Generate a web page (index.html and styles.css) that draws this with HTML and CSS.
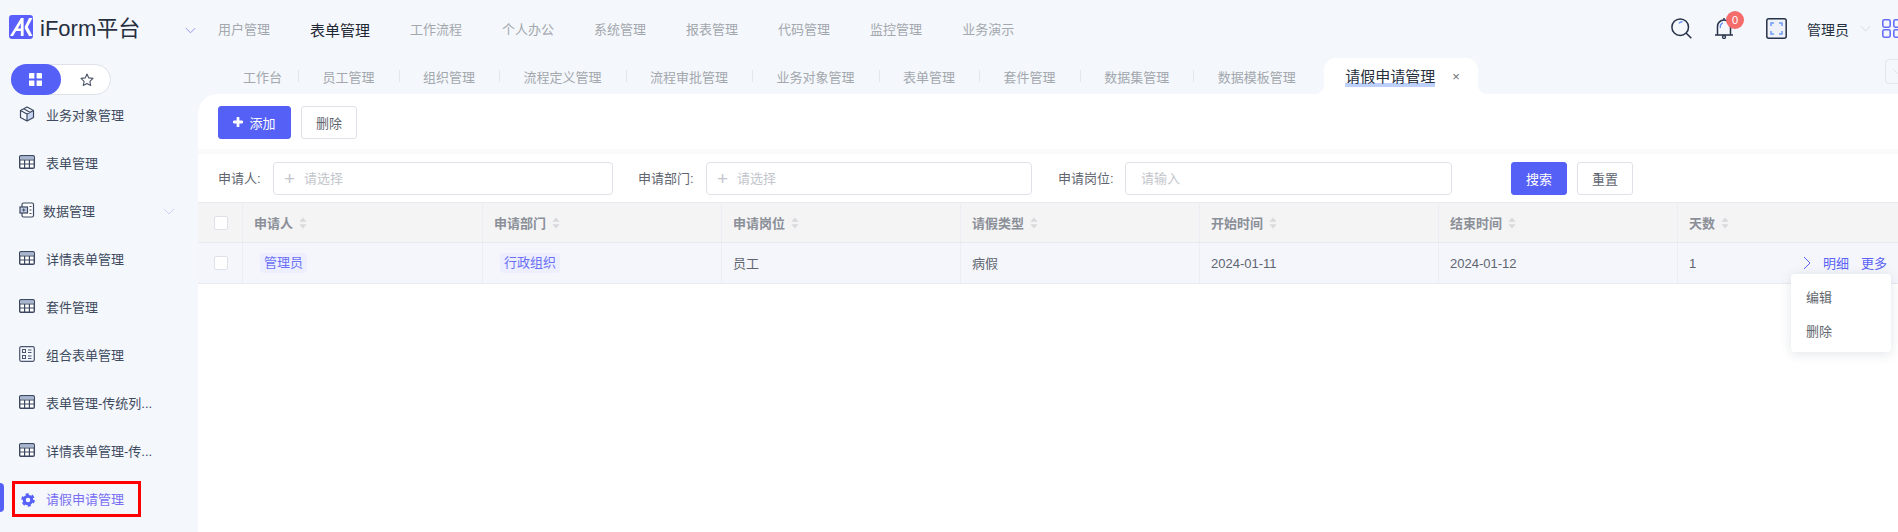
FILE: index.html
```html
<!DOCTYPE html>
<html lang="zh-CN">
<head>
<meta charset="utf-8">
<title>iForm平台</title>
<link rel="stylesheet" href="styles.css">
</head>
<body>
<svg class="defs" width="0" height="0" aria-hidden="true">
  <symbol id="i-table" viewBox="0 0 16 14">
    <rect x=".7" y=".7" width="14.6" height="12.6" rx="1.2" fill="#fff" stroke="#3c4860" stroke-width="1.4"/>
    <rect x="1.4" y="1.4" width="13.2" height="3" fill="#a9b6d0"/>
    <path d="M1 5h14M1 9h14M5.6 5v8M10.4 5v8" stroke="#3c4860" stroke-width="1.2" fill="none"/>
  </symbol>
  <symbol id="i-sort" viewBox="0 0 8 12">
    <path d="M4 0.5 7.6 4.8H.4zM4 11.5.4 7.2h7.2z" fill="#d8d9dc"/>
  </symbol>
  <symbol id="i-chev" viewBox="0 0 12 7">
    <path d="M.8.8 6 6 11.2.8" fill="none" stroke="currentColor" stroke-width="1"/>
  </symbol>
</svg>

<header class="topbar">
  <svg class="logo" viewBox="0 0 24 24" aria-hidden="true">
    <rect width="24" height="24" rx="3" fill="#5a5ffb"/>
    <path d="M1 21 12 3h2.600v18h-2.800v-5H7l-3 5zM8.800 13.500h3V8.600z" fill="#fff"/>
    <path d="M15.800 11.500 20 3h3.500l-4.700 9 4.700 9H20l-4.200-7.500z" fill="#fff"/>
  </svg>
  <span class="brand">iForm平台</span>
  <svg class="chev chev-brand"><use href="#i-chev"/></svg>
  <nav class="mainnav">
    <a>用户管理</a><a class="on">表单管理</a><a>工作流程</a><a>个人办公</a><a>系统管理</a><a>报表管理</a><a>代码管理</a><a>监控管理</a><a>业务演示</a>
  </nav>
  <div class="tools">
    <svg class="t-search" viewBox="0 0 21 21" aria-hidden="true">
      <circle cx="9.2" cy="9.2" r="8.3" fill="none" stroke="#27324a" stroke-width="1.5"/>
      <path d="M15.3 15.3 20.3 20.3" stroke="#27324a" stroke-width="1.6"/>
      <path d="M8 5.2A4.5 4.5 0 0 1 11.5 3.8" stroke="#5f8ffb" stroke-width="1.5" fill="none"/>
    </svg>
    <div class="t-bell">
      <svg viewBox="0 0 20 21" aria-hidden="true">
        <path d="M0 17h18M2.500 17V8.500a6.500 6.500 0 0 1 13 0V17M9 2V0" fill="none" stroke="#27324a" stroke-width="1.500"/>
        <path d="M5.500 10A4 4 0 0 1 8 4.800" fill="none" stroke="#5f8ffb" stroke-width="1.300"/>
        <circle cx="9" cy="19" r="1.500" fill="none" stroke="#27324a" stroke-width="1.300"/>
      </svg>
      <span class="badge">0</span>
    </div>
    <svg class="t-full" viewBox="0 0 21 21" aria-hidden="true">
      <rect x=".8" y=".8" width="19.4" height="19.4" rx="2" fill="#eef1f7" stroke="#27324a" stroke-width="1.5"/>
      <path d="M5 8V5h3M13 5h3v3M16 13v3h-3M8 16H5v-3" fill="none" stroke="#6f9bfb" stroke-width="1.5"/>
    </svg>
    <span class="uname">管理员</span>
    <svg class="chev chev-user"><use href="#i-chev"/></svg>
    <svg class="t-apps" viewBox="0 0 20 19" aria-hidden="true">
      <rect x=".8" y=".8" width="7.4" height="7.4" rx="1.6"/><rect x="11.8" y=".8" width="7.4" height="7.4" rx="1.6"/>
      <rect x=".8" y="10.8" width="7.4" height="7.4" rx="1.6"/><rect x="11.8" y="10.8" width="7.4" height="7.4" rx="1.6"/>
    </svg>
  </div>
</header>

<div class="body">
  <aside class="side">
    <div class="toggle">
      <span class="tg tg-on">
        <svg class="tg-grid" viewBox="0 0 12 12" aria-hidden="true"><path d="M0 1a1 1 0 0 1 1-1h4v5H0zM7 0h4a1 1 0 0 1 1 1v4H7zM0 7h5v5H1a1 1 0 0 1-1-1zM7 7h5v4a1 1 0 0 1-1 1H7z" fill="#fff"/></svg>
      </span>
      <span class="tg">
        <svg class="tg-star" viewBox="0 0 14 14" aria-hidden="true"><path d="M7 1l1.8 3.9 4.2.5-3.1 2.9.8 4.2L7 10.4l-3.7 2.1.8-4.2L1 5.4l4.2-.5z" fill="none" stroke="#4b5568" stroke-width="1.1" stroke-linejoin="round"/></svg>
      </span>
    </div>
    <ul class="menu">
      <li><svg class="mi" viewBox="0 0 16 16" aria-hidden="true"><path d="M8 8l6.5-3.5V11.500L8 15z" fill="#c9d6f2"/><path d="M8 1l6.500 3.500V11.500L8 15 1.500 11.500V4.500zM1.500 4.500 8 8l6.500-3.500M8 8v7M4.800 2.800l6.400 3.600" fill="none" stroke="#3c4860" stroke-width="1.200" stroke-linejoin="round"/></svg>业务对象管理</li>
      <li><svg class="mi"><use href="#i-table"/></svg>表单管理</li>
      <li class="group"><svg class="mi mi-data" viewBox="0 0 16 16" aria-hidden="true"><rect x="3" y="1" width="11.500" height="14" rx="1.500" fill="#fff" stroke="#3c4860" stroke-width="1.200"/><rect x="1" y="5" width="7.500" height="6" fill="#c4cfe6" stroke="#3c4860" stroke-width="1.200"/><path d="M10.500 4.500h2M10.500 8h2M10.500 11.500h2M4.700 6.500v3M3.300 8h3" stroke="#3c4860" stroke-width="1"/></svg>数据管理<svg class="chev chev-side"><use href="#i-chev"/></svg></li>
      <li><svg class="mi"><use href="#i-table"/></svg>详情表单管理</li>
      <li><svg class="mi"><use href="#i-table"/></svg>套件管理</li>
      <li><svg class="mi" viewBox="0 0 16 16" aria-hidden="true"><rect x=".7" y=".7" width="14.600" height="14.600" rx="1.500" fill="none" stroke="#4b5670" stroke-width="1.200"/><rect x="3.500" y="3.500" width="3" height="3" fill="none" stroke="#4b5670"/><rect x="3.500" y="9.500" width="3" height="3" fill="none" stroke="#4b5670"/><path d="M9 4h3.500M9 6.500h3.500M9 10h3.500M9 12.500h3.500" stroke="#4b5670"/></svg>组合表单管理</li>
      <li><svg class="mi"><use href="#i-table"/></svg>表单管理-传统列...</li>
      <li><svg class="mi"><use href="#i-table"/></svg>详情表单管理-传...</li>
      <li class="current"><svg class="mi-gear" viewBox="0 0 14 14" aria-hidden="true"><circle cx="7" cy="7" r="3.800" fill="none" stroke="#5560f6" stroke-width="3"/><circle cx="7" cy="7" r="5.800" fill="none" stroke="#5560f6" stroke-width="2" stroke-dasharray="3.070 3.000"/></svg><span class="cur-text">请假申请管理</span></li>
    </ul>
    <span class="active-bar"></span>
    <span class="red-box"></span>
  </aside>

  <main class="main">
    <div class="tabs">
      <a class="tab tab-first">工作台</a><a class="tab">员工管理</a><a class="tab">组织管理</a><a class="tab">流程定义管理</a><a class="tab">流程审批管理</a><a class="tab">业务对象管理</a><a class="tab">表单管理</a><a class="tab">套件管理</a><a class="tab">数据集管理</a><a class="tab tab-last">数据模板管理</a>
      <a class="tab-on"><span class="tab-label">请假申请管理</span><span class="tab-x">×</span></a>
      <span class="tab-more"><svg class="chev"><use href="#i-chev"/></svg></span>
    </div>

    <section class="card">
      <div class="toolbar">
        <button class="btn btn-primary btn-add"><svg class="plus" viewBox="0 0 10 10" aria-hidden="true"><path d="M5 1v8M1 5h8" stroke="#fff" stroke-width="2.800" stroke-linecap="round"/></svg>添加</button>
        <button class="btn btn-del">删除</button>
      </div>
      <div class="band"></div>
      <form class="filter">
        <label class="lb lb-3">申请人:</label>
        <div class="inp inp-1"><span class="pl">+</span><span class="ph">请选择</span></div>
        <label class="lb lb-second">申请部门:</label>
        <div class="inp inp-2"><span class="pl">+</span><span class="ph">请选择</span></div>
        <label class="lb lb-third">申请岗位:</label>
        <div class="inp inp-3"><span class="ph ph-only">请输入</span></div>
        <button type="button" class="btn btn-primary btn-search">搜索</button>
        <button type="button" class="btn btn-reset">重置</button>
      </form>

      <div class="grid ghead">
        <div class="c c-check"><span class="cb"></span></div>
        <div class="c">申请人<svg class="sort"><use href="#i-sort"/></svg></div>
        <div class="c">申请部门<svg class="sort"><use href="#i-sort"/></svg></div>
        <div class="c">申请岗位<svg class="sort"><use href="#i-sort"/></svg></div>
        <div class="c">请假类型<svg class="sort"><use href="#i-sort"/></svg></div>
        <div class="c">开始时间<svg class="sort"><use href="#i-sort"/></svg></div>
        <div class="c">结束时间<svg class="sort"><use href="#i-sort"/></svg></div>
        <div class="c c-noline">天数<svg class="sort"><use href="#i-sort"/></svg></div>
        <div class="c c-noline"></div>
      </div>
      <div class="grid grow">
        <div class="c c-check"><span class="cb"></span></div>
        <div class="c"><span class="tag">管理员</span></div>
        <div class="c"><span class="tag">行政组织</span></div>
        <div class="c"><span class="cn">员工</span></div>
        <div class="c"><span class="cn">病假</span></div>
        <div class="c">2024-01-11</div>
        <div class="c">2024-01-12</div>
        <div class="c c-noline">1</div>
        <div class="c c-noline c-act">
          <svg class="act-chev" viewBox="0 0 8 14" aria-hidden="true"><path d="M1 1l6 6-6 6" fill="none" stroke="#5b62f6" stroke-width="1"/></svg>
          <a class="link">明细</a><a class="link">更多</a>
        </div>
      </div>

      <ul class="dropdown">
        <li>编辑</li>
        <li>删除</li>
      </ul>
    </section>
  </main>
</div>
</body>
</html>
```
FILE: styles.css
```css
* { box-sizing: border-box; }
html, body { height: 100%; }
body {
  margin: 0;
  height: 532px;
  width: 1898px;
  overflow: hidden;
  background: #f4f7fb;
  font-family: "Liberation Sans", "Noto Sans CJK SC", sans-serif;
  font-size: 13px;
  color: #5f6570;
  display: flex;
  flex-direction: column;
}
.defs { position: absolute; }
a { cursor: pointer; }
ul { list-style: none; margin: 0; padding: 0; }

/* top bar */
.topbar { height: 58px; flex: none; display: flex; align-items: center; }
.logo { width: 24px; height: 24px; margin-left: 9px; margin-top: -4px; flex: none; }
.brand { margin-left: 7px; width: 106px; font-size: 22px; line-height: 28px; margin-top: -1px; color: #27303f; white-space: nowrap; }
.chev { width: 12px; height: 7px; flex: none; color: #d3d8e2; }
.chev-brand { margin-left: 39px; margin-top: 3px; color: #8d8ff5; width: 11px; }
.mainnav { margin-left: 22px; display: flex; align-items: center; gap: 40px; color: #a3a7ae; font-size: 13px; margin-top: -1px; }
.mainnav .on { font-size: 15px; color: #1f2735; margin-top: 2px; }
.tools { margin-left: auto; display: flex; align-items: center; margin-right: -4px; margin-top: -1px; flex: none; }
.t-search { width: 21px; height: 21px; }
.t-bell { position: relative; width: 20px; height: 21px; margin-left: 23px; }
.t-bell svg { width: 20px; height: 21px; display: block; }
.badge { position: absolute; left: 11px; top: -7px; width: 18px; height: 18px; border-radius: 50%; background: #f56c6c; color: #fff; font-size: 11px; line-height: 18px; text-align: center; }
.t-full { width: 21px; height: 21px; margin-left: 31px; }
.uname { margin-left: 20px; font-size: 14px; color: #27303f; white-space: nowrap; }
.chev-user { margin-left: 11px; width: 11px; }
.t-apps { width: 20px; height: 19px; margin-left: 11px; fill: none; stroke: #666ef7; stroke-width: 1.6; }

/* layout */
.body { flex: 1; display: flex; min-height: 0; }

/* sidebar */
.side { position: relative; width: 198px; flex: none; padding-top: 6px; overflow: hidden; }
.toggle { margin-left: 11px; width: 100px; height: 31px; border: 1px solid #dfe2ea; border-radius: 16px; background: #fff; display: flex; position: relative; z-index: 1; }
.tg { width: 50px; display: flex; align-items: center; justify-content: center; margin: -1px 0; }
.tg-on { background: #5560f6; border-radius: 16px; margin-left: -1px; }
.tg-grid { width: 13px; height: 13px; }
.tg-star { width: 14px; height: 14px; margin-left: 4px; }
.menu { margin-top: -5px; }
.menu li { height: 48px; display: flex; align-items: center; padding-left: 19px; color: #3e4a5e; font-size: 13px; white-space: nowrap; }
.mi { width: 16px; height: 16px; margin-right: 11px; flex: none; }
.mi-data { margin-right: 8px; }
.group { position: relative; }
.chev-side { margin-left: 68px; margin-top: 3px; color: #cdd2f3; }
.current { padding-left: 21px !important; }
.mi-gear { width: 14px; height: 14px; margin-right: 11px; margin-top: 3px; flex: none; }
.cur-text { color: #7a6ff4; }
.active-bar { position: absolute; left: 0; top: 425px; width: 4px; height: 29px; background: #5560f6; border-radius: 0 4px 4px 0; }
.red-box { position: absolute; left: 12px; top: 423px; width: 129px; height: 36px; border: 3px solid #f00; }

/* main */
.main { flex: 1; min-width: 0; display: flex; flex-direction: column; overflow: hidden; }
.tabs { height: 36px; flex: none; display: flex; align-items: stretch; padding-left: 21px; position: relative; color: #a3a7ae; }
.tab { position: relative; padding: 0 24px; display: flex; align-items: center; white-space: nowrap; margin-right: .5px; padding-top: 1px; }
.tab-first { padding-right: 16px; }
.tab::after { content: ""; position: absolute; right: -1px; top: 12px; width: 1px; height: 12px; background: #e4e6eb; }
.tab-last::after { display: none; }
.tab-on { position: relative; margin-left: 4px; width: 154px; padding-left: 21px; background: #fff; border-radius: 12px 12px 0 0; display: flex; align-items: center; color: #27303f; font-size: 15px; padding-top: 1px; }
.tab-on::before, .tab-on::after { content: ""; position: absolute; bottom: 0; width: 10px; height: 10px; }
.tab-on::before { left: -10px; background: radial-gradient(circle at 0 0, transparent 10px, #fff 10.500px); }
.tab-on::after { right: -10px; background: radial-gradient(circle at 100% 0, transparent 10px, #fff 10.500px); }
.tab-label { box-shadow: inset 0 -4px 0 #bcd0fb; line-height: 20px; white-space: nowrap; }
.tab-x { margin-left: 17px; font-size: 13px; color: #6b6f78; }
.tab-more { position: absolute; right: -12px; top: 1px; width: 25px; height: 25px; border: 1px solid #e3e6ec; border-radius: 4px; display: flex; align-items: center; justify-content: center; }
.tab-more .chev { width: 9px; }

/* card */
.card { flex: 1; min-height: 0; background: #fff; border-top-left-radius: 20px; position: relative; overflow: hidden; }
.toolbar { height: 55px; display: flex; align-items: center; padding: 1px 0 0 20px; gap: 10px; }
.band { height: 5px; background: #fafafa; }
.btn { height: 33px; padding: 0; border: 1px solid #dfe1e8; border-radius: 3px; background: #fff; color: #5f6570; font: inherit; font-size: 13px; display: inline-flex; align-items: center; justify-content: center; }
.btn-primary { background: #5560f6; border-color: #5560f6; color: #fff; }
.btn-add { width: 73px; }
.plus { width: 10px; height: 10px; margin-right: 6px; }
.btn-del { width: 56px; }
.filter { height: 48px; display: flex; align-items: center; padding-left: 20px; }
.lb { color: #5f6570; white-space: nowrap; margin-top: -1px; }
.lb-3 { width: 55px; }
.lb-second { width: 68px; margin-left: 25px; }
.lb-third { width: 67px; margin-left: 26px; }
.inp { height: 33px; border: 1px solid #dfe1e8; border-radius: 4px; background: #fff; display: flex; align-items: center; padding-left: 10px; color: #c3c6cc; }
.inp-1 { width: 340px; }
.inp-2 { width: 326px; }
.inp-3 { width: 327px; }
.pl { font-size: 19px; font-weight: 300; width: 20px; line-height: 1; }
.ph { margin-top: -1px; }
.ph-only { margin-left: 5px; }
.btn-search { width: 56px; margin-left: 59px; }
.btn-reset { width: 56px; margin-left: 10px; }

/* table */
.grid { display: grid; grid-template-columns: 45px 240px repeat(5, 239px) 117px 220px; width: 1716px; }
.c { display: flex; align-items: center; padding-left: 11px; border-right: 1px solid #ebedf3; white-space: nowrap; }
.c-noline { border-right: 0; }
.c-check { padding-left: 16px; }
.ghead { height: 41px; background: #f4f4f5; border-top: 1px solid #e8eaf2; border-bottom: 1px solid #e8eaf2; color: #8b8f98; font-weight: 700; }
.grow { height: 41px; background: #f4f6fb; border-bottom: 1px solid #e8eaf2; color: #5f6570; }
.cb { width: 14px; height: 14px; background: #fff; border: 1px solid #dfe1e8; border-radius: 2px; }
.sort { width: 8px; height: 12px; margin-left: 6px; }
.cn { margin-top: -2px; }
.tag { margin-left: 6px; padding: 0 4px; height: 20px; line-height: 20px; border-radius: 4px; background: #eeeffe; color: #6a6ff5; }
.c-act { padding-left: 8px; }
.act-chev { width: 8px; height: 14px; margin-right: 12px; }
.link { color: #5b62f6; margin-right: 12px; margin-top: -2px; }
.dropdown { position: absolute; left: 1593px; top: 180px; width: 100px; height: 78px; padding: 5px 0; background: #fff; border-radius: 4px; box-shadow: 0 2px 12px rgba(60, 70, 100, .14); z-index: 2; }
.dropdown li { height: 34px; display: flex; align-items: center; padding-left: 15px; color: #62666e; }
```
